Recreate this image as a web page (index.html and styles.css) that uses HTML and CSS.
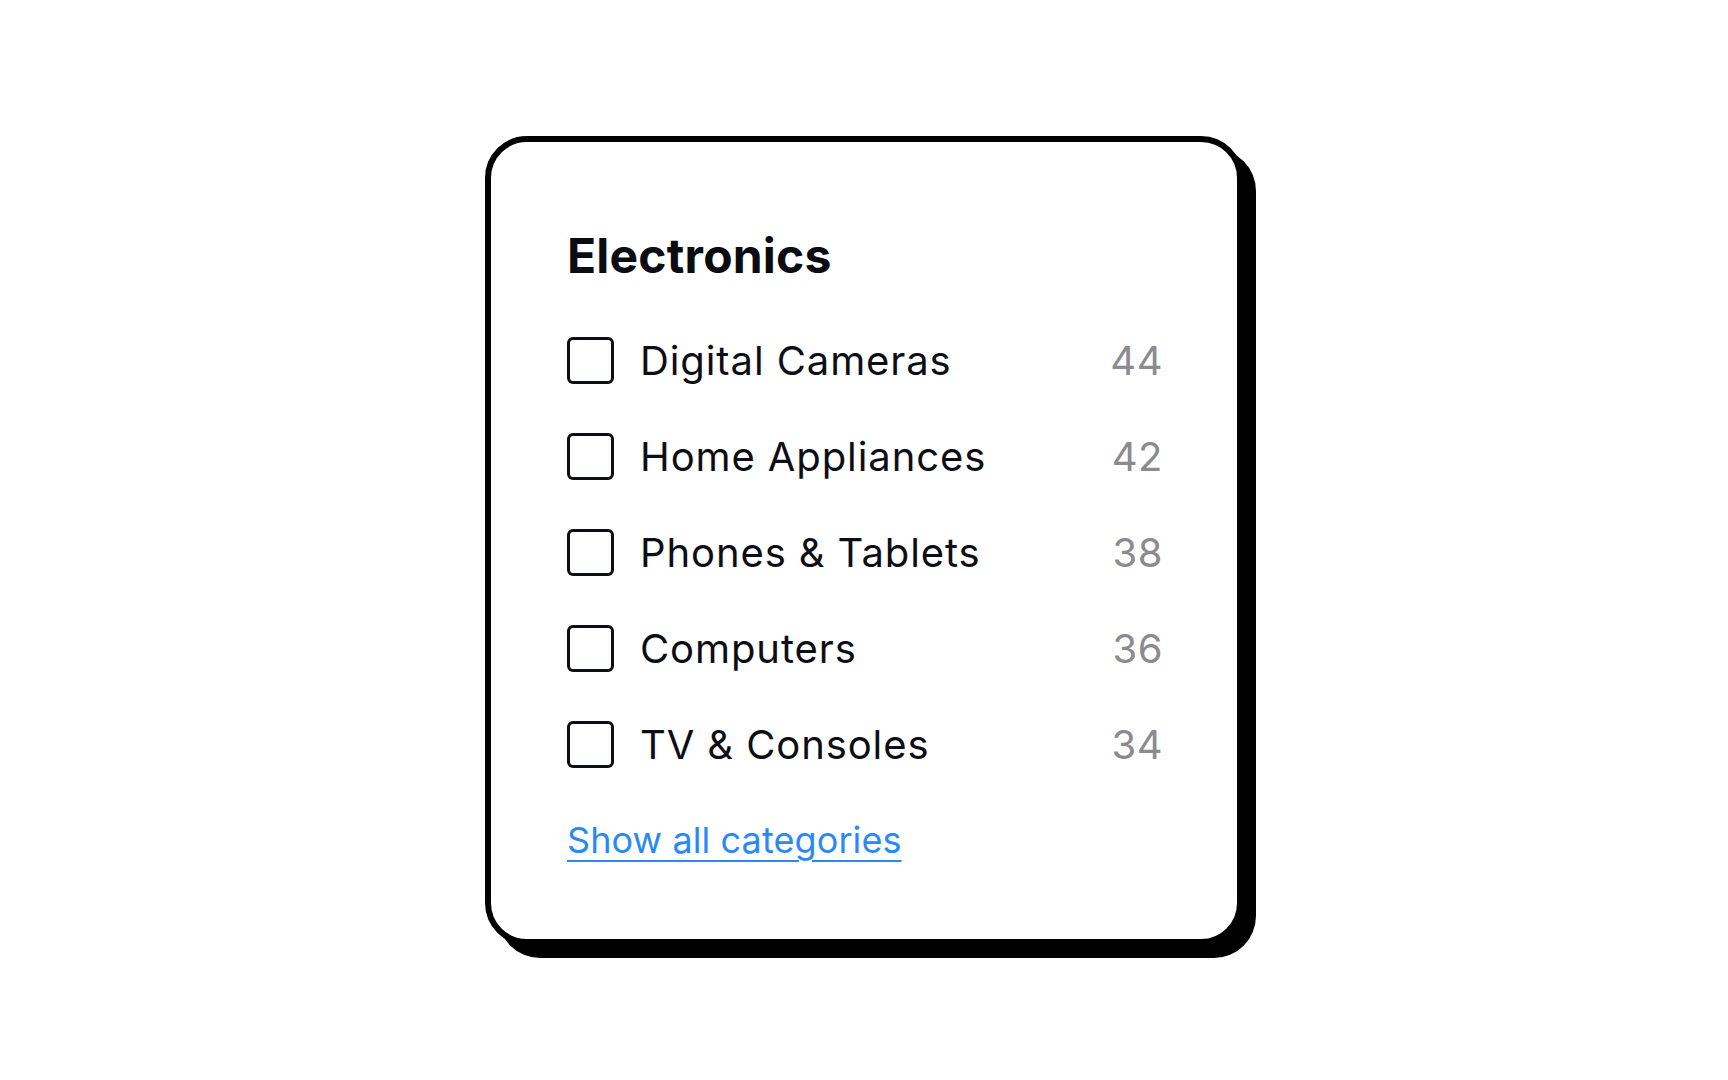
FILE: index.html
```html
<!DOCTYPE html>
<html>
    <head>
        <link rel="stylesheet" href="styles.css">
    </head>
    <body>
        <div class="filterCard">
            <h2 class="filterTitle">Electronics</h2>
            <div class="filterList">
                <label class="filterItem">
                    <span class="checkBox"></span>
                    <span class="itemName">Digital Cameras</span>
                    <span class="itemCount">44</span>
                </label>
                <label class="filterItem">
                    <span class="checkBox"></span>
                    <span class="itemName">Home Appliances</span>
                    <span class="itemCount">42</span>
                </label>
                <label class="filterItem">
                    <span class="checkBox"></span>
                    <span class="itemName">Phones &amp; Tablets</span>
                    <span class="itemCount">38</span>
                </label>
                <label class="filterItem">
                    <span class="checkBox"></span>
                    <span class="itemName">Computers</span>
                    <span class="itemCount">36</span>
                </label>
                <label class="filterItem">
                    <span class="checkBox"></span>
                    <span class="itemName">TV &amp; Consoles</span>
                    <span class="itemCount">34</span>
                </label>
            </div>
            <a class="showAll" href="#">Show all categories</a>
        </div>
    </body>
</html>
```

FILE: styles.css
```css
body{
  margin: 0;
  height: 100vh;
  display: flex;
  align-items: center;
  justify-content: center;
  background-color: #fff;
  font-family: Inter, "Noto Sans", sans-serif;
}
.filterCard{
  box-sizing: border-box;
  width: 758px;
  height: 809px;
  padding: 85px 74px 77px 76px;
  background-color: #fff;
  border: 6px solid #000;
  border-radius: 42px;
  box-shadow: 13px 13px 0 #000;
  display: flex;
  flex-direction: column;
}
.filterTitle{
  margin: 0 0 28px 0;
  font-size: 48px;
  line-height: 58px;
  font-weight: 700;
  letter-spacing: 0.2px;
  color: #0b0b12;
}
.filterList{
  display: flex;
  flex-direction: column;
  margin-bottom: 25px;
}
.filterItem{
  display: flex;
  align-items: center;
  height: 96px;
  font-size: 40px;
  line-height: 96px;
  color: #0d0d16;
}
.checkBox{
  box-sizing: border-box;
  width: 47px;
  height: 47px;
  border: 3px solid #0d0d16;
  border-radius: 6px;
  margin-right: 26px;
  flex-shrink: 0;
}
.itemName{
  flex: 1;
  letter-spacing: 0.9px;
}
.itemCount{
  color: #8a8a8f;
  letter-spacing: 0.5px;
}
.showAll{
  align-self: flex-start;
  font-size: 36px;
  line-height: 44px;
  letter-spacing: 0.1px;
  color: #2a89f8;
  text-decoration: underline;
  text-decoration-thickness: 2px;
  text-underline-offset: 7px;
}
```
